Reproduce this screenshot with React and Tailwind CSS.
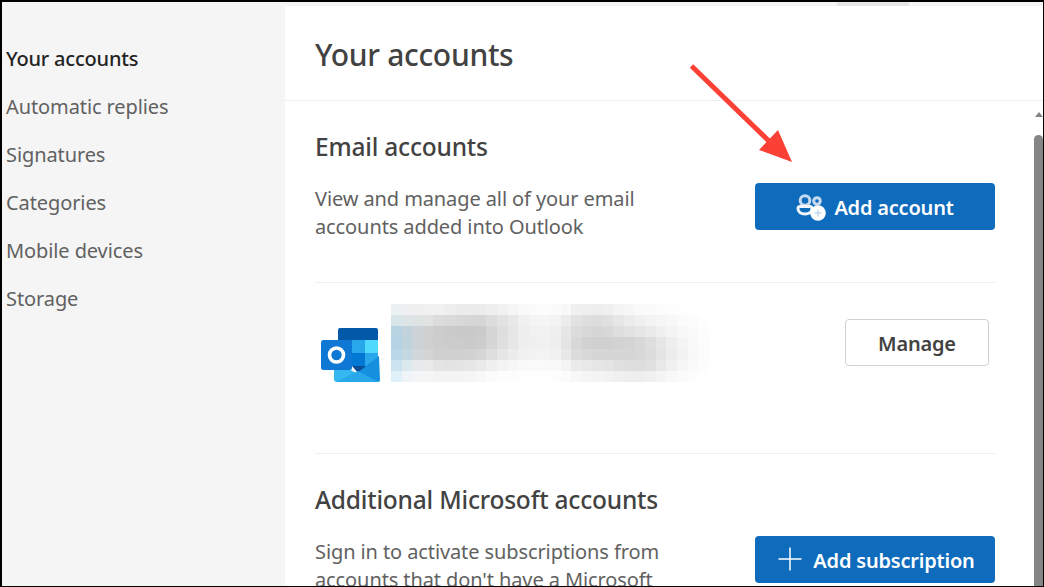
import React from 'react';

const navItems = ['Your accounts', 'Automatic replies', 'Signatures', 'Categories', 'Mobile devices', 'Storage'];

// pixelated blur over the account name
const blurRows = [
  ['#ecf1f4', '#eef0f2', '#f0f0f1', '#f1f1f1', '#f1f1f1', '#eeeeee', '#ececec', '#ececec', '#ececec', '#eeeeee', '#f1f1f1', '#f5f5f5', '#f9f9f9', '#fbfbfb', '#fcfcfc', '#fbfbfb', '#f8f8f8', '#f0f0f0', '#efefef', '#eeeeee', '#f0f0f0', '#f4f4f4', '#f7f7f7', '#fafafa', '#fbfbfb', '#fcfcfc', '#fdfdfd', '#fefefe', '#fefefe', '#ffffff'],
  ['#d8e6ea', '#dde5e7', '#e0e3e4', '#e1e2e2', '#dcdcdc', '#dadada', '#d8d8d8', '#d6d6d6', '#d6d6d6', '#dcdcdc', '#e2e2e2', '#e8e8e8', '#f0f0f0', '#f4f4f4', '#f5f5f5', '#f3f3f3', '#ececec', '#e2e2e2', '#dedede', '#dddddd', '#e0e0e0', '#e6e6e6', '#ececec', '#f0f0f0', '#f3f3f3', '#f6f6f6', '#f8f8f8', '#fbfbfb', '#fcfcfc', '#fefefe'],
  ['#b8d4e2', '#c2d3dc', '#ccd4d9', '#d0d0d0', '#cccccc', '#cacaca', '#c9c9c9', '#c9c9c9', '#cbcbcb', '#d5d5d5', '#dedede', '#e6e6e6', '#eeeeee', '#f1f1f1', '#f2f2f2', '#f0f0f0', '#e6e6e6', '#dcdcdc', '#d8d8d8', '#d6d6d6', '#d8d8d8', '#dedede', '#e2e2e2', '#e6e6e6', '#eaeaea', '#f0f0f0', '#f4f4f4', '#f8f8f8', '#fbfbfb', '#fdfdfd'],
  ['#b4d4e6', '#c0d2dc', '#ccd3d8', '#cfcfcf', '#cdcdcd', '#cccccc', '#cccccc', '#cbcbcb', '#cdcdcd', '#d6d6d6', '#dfdfdf', '#e7e7e7', '#eeeeee', '#f0f0f0', '#f1f1f1', '#eeeeee', '#e4e4e4', '#d8d8d8', '#d2d2d2', '#d0d0d0', '#d0d0d0', '#d2d2d2', '#d4d4d4', '#d8d8d8', '#dedede', '#e6e6e6', '#eeeeee', '#f4f4f4', '#f9f9f9', '#fcfcfc'],
  ['#b8d8ea', '#c4d8e2', '#d0d8dc', '#d4d4d4', '#d0d0d0', '#d0d0d0', '#d0d0d0', '#d2d2d2', '#d6d6d6', '#dedede', '#e6e6e6', '#ececec', '#f1f1f1', '#f3f3f3', '#f3f3f3', '#f1f1f1', '#e8e8e8', '#dcdcdc', '#d8d8d8', '#d6d6d6', '#d6d6d6', '#d6d6d6', '#d6d6d6', '#d8d8d8', '#dcdcdc', '#e4e4e4', '#ececec', '#f2f2f2', '#f8f8f8', '#fcfcfc'],
  ['#cce4f0', '#dbe8ee', '#e6eaec', '#eaeaea', '#e4e4e4', '#e3e3e3', '#e4e4e4', '#e6e6e6', '#eaeaea', '#f0f0f0', '#f4f4f4', '#f7f7f7', '#f9f9f9', '#fafafa', '#fafafa', '#f9f9f9', '#f4f4f4', '#eaeaea', '#e8e8e8', '#e6e6e6', '#e4e4e4', '#e0e0e0', '#dedede', '#dddddd', '#e0e0e0', '#e8e8e8', '#f0f0f0', '#f6f6f6', '#fafafa', '#fdfdfd'],
  ['#e0f0f8', '#eef4f8', '#f4f5f6', '#f6f6f6', '#f4f4f4', '#f4f4f4', '#f4f4f4', '#f5f5f5', '#f8f8f8', '#fbfbfb', '#fdfdfd', '#fdfdfd', '#fefefe', '#fefefe', '#fefefe', '#fdfdfd', '#fbfbfb', '#f7f7f7', '#f5f5f5', '#f4f4f4', '#f2f2f2', '#f0f0f0', '#eeeeee', '#eeeeee', '#f0f0f0', '#f4f4f4', '#f8f8f8', '#fbfbfb', '#fdfdfd', '#fefefe'],
];

function AddAccountIcon() {
  return (
    <svg width="30" height="28" viewBox="0 0 30 28" fill="none">
      <circle cx="9" cy="7.500" r="4.800" stroke="#c6d9ee" strokeWidth="3" />
      <circle cx="21" cy="8" r="3.300" stroke="#c6d9ee" strokeWidth="3" />
      <path d="M2 15.500c0-1.200 1-2 2-2h10c1.400 0 2 .8 2 2 0 3.500-3 5.500-7 5.500s-7-2-7-5.500z" stroke="#f2f6fb" strokeWidth="3" />
      <circle cx="22" cy="20" r="7.800" fill="#ffffff" />
      <path d="M22 16.500v7M18.500 20h7" stroke="#a9c8e8" strokeWidth="1" />
    </svg>
  );
}

function OutlookLogo() {
  return (
    <svg width="60" height="57" viewBox="0 0 60 57" className="block">
      <path d="M20 1h36a2 2 0 0 1 2 2v10H18V3a2 2 0 0 1 2-2z" fill="#0358a7" />
      <rect x="18" y="13" width="14" height="13" fill="#0078d4" />
      <rect x="32" y="13" width="13" height="13" fill="#28a8ea" />
      <rect x="45" y="13" width="13" height="13" fill="#50d9ff" />
      <rect x="18" y="26" width="14" height="13" fill="#0364b8" />
      <rect x="32" y="26" width="13" height="13" fill="#0078d4" />
      <rect x="45" y="26" width="13" height="13" fill="#28a8ea" />
      <path d="M32 39h26v-3L38 46z" fill="#0a4f96" />
      <path d="M59 29 60 53a2 2 0 0 1-2 2H40L37 46z" fill="#1490df" />
      <path d="M14 34l24 13 4 8H17A3 3 0 0 1 14 52z" fill="#35b8f1" />
      <path d="M16 55 38 44l21 11z" fill="#28a8ea" />
      <rect x="1" y="13" width="31" height="30" rx="2.500" fill="#0f78d4" />
      <circle cx="16.500" cy="28" r="7" fill="none" stroke="#ffffff" strokeWidth="3.600" />
    </svg>
  );
}

export default function App() {
  return (
    <div className="relative flex flex-col w-[1044px] h-[587px] overflow-hidden bg-white border-t-2 border-l-2 border-r border-b border-black text-[#616161] font-['Noto_Sans',sans-serif]">
      <div className="flex justify-end h-[4px] bg-[#f5f5f5] shrink-0">
        <div className="w-[72px] mr-[134px] bg-[#e6e6e6]" />
      </div>
      <div className="flex flex-1 min-h-0">
        <aside className="w-[283px] shrink-0 bg-[#f5f5f5] pt-[29px] pl-[4px]">
          {navItems.map((item, i) => (
            <div key={item} className={`h-12 flex items-center text-[20px] tracking-[-0.1px] ${i === 0 ? 'text-[#242424] font-medium tracking-[-0.2px]' : 'text-[#616161]'}`}>{item}</div>
          ))}
        </aside>
        <main className="flex-1 min-w-0 flex flex-col">
          <div className="h-[95px] shrink-0 pl-[30px] pt-[25px] border-b border-[#eeeeee]">
            <h1 className="text-[30px] leading-[48px] font-medium text-[#424242] tracking-[-0.3px]">Your accounts</h1>
          </div>
          <div className="flex flex-1 min-h-0">
            <div className="flex-1 min-w-0 overflow-hidden pl-[30px] pr-[39px]">
              <section className="h-[182px] pt-[29px] border-b border-[#eeeeee]">
                <h2 className="text-[24.500px] leading-[34px] font-medium text-[#424242] tracking-[-0.2px]">Email accounts</h2>
                <div className="flex justify-between">
                  <p className="w-[370px] mt-[21px] text-[20px] leading-[28px] tracking-[-0.1px]">View and manage all of your email accounts added into Outlook</p>
                  <button className="w-[240px] h-[47px] mt-[19px] pt-[3px] flex items-center justify-center gap-[8px] rounded bg-[#0f6cbd] text-white text-[20px] font-semibold tracking-[-0.2px]">
                    <span className="-mt-[3px]"><AddAccountIcon /></span>
                    Add account
                  </button>
                </div>
              </section>
              <section className="h-[171px] border-b border-[#eeeeee] flex items-start">
                <div className="w-[5px]" />
                <div className="mt-[44px]"><OutlookLogo /></div>
                <div className="ml-[11px] mt-[21px] w-[318px] h-[78px] grid grid-rows-7">
                  {blurRows.map((row, r) => (
                    <div key={r} className="flex">
                      {row.map((c, i) => <div key={i} className="flex-1" style={{ backgroundColor: c }} />)}
                    </div>
                  ))}
                </div>
                <button className="ml-[136px] mt-[36px] w-[144px] h-[47px] pt-[3px] rounded border border-[#d1d1d1] bg-white text-[#424242] text-[20px] font-semibold tracking-[-0.2px]">Manage</button>
              </section>
              <section className="pt-[29px]">
                <h2 className="text-[24.500px] leading-[34px] font-medium text-[#424242] tracking-[-0.2px]">Additional Microsoft accounts</h2>
                <div className="flex justify-between">
                  <p className="w-[370px] mt-[21px] text-[20px] leading-[28px] tracking-[-0.1px]">Sign in to activate subscriptions from accounts that don't have a Microsoft</p>
                  <button className="w-[240px] h-[47px] mt-[19px] pt-[3px] pl-[3px] flex shrink-0 items-center justify-center gap-[11px] rounded bg-[#0f6cbd] text-white text-[20px] font-semibold tracking-[-0.2px]">
                    <svg width="24" height="24" viewBox="0 0 24 24" className="-mt-[4px]"><path d="M12 0.500v23M0.500 12h23" stroke="#ffffff" strokeWidth="1.500" /></svg>
                    Add subscription
                  </button>
                </div>
              </section>
            </div>
            <div className="w-[9px] shrink-0 flex flex-col items-center pt-[11px]">
              <div className="w-0 h-0 border-l-[4.500px] border-r-[4.500px] border-b-[5px] border-l-transparent border-r-transparent border-b-[#858585]" />
              <div className="mt-[18px] flex-1 w-[9px] rounded-t-full bg-[#858585]" />
            </div>
          </div>
        </main>
      </div>
      <svg width="110" height="105" viewBox="0 0 110 105" className="absolute left-[686px] top-[58px]">
        <path d="M3.500 6 84 84" stroke="#fb4136" strokeWidth="5" />
        <path d="M104 102 90 70 71 90z" fill="#fb4136" />
      </svg>
    </div>
  );
}
